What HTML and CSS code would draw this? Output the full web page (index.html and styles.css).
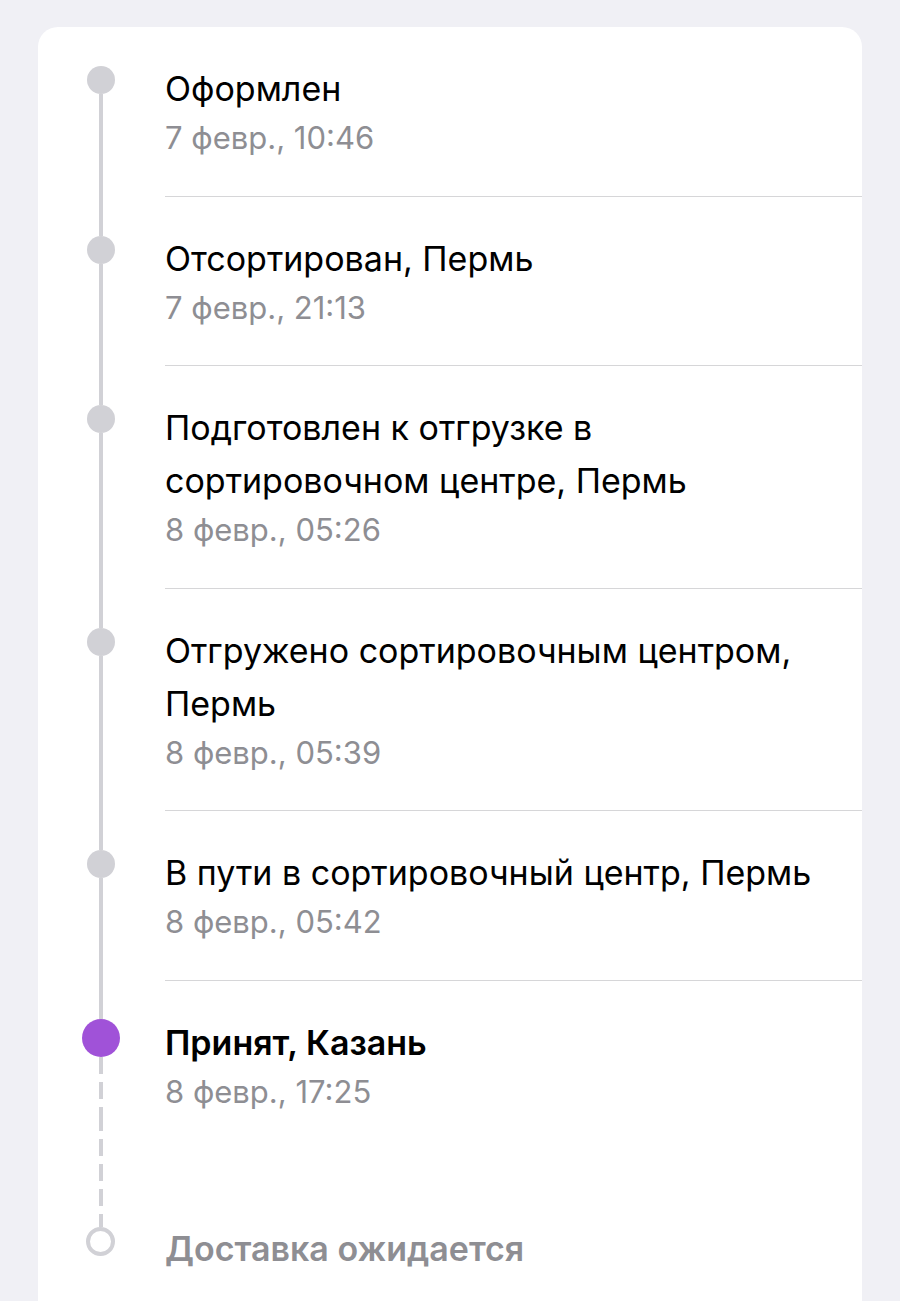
FILE: index.html
```html
<!DOCTYPE html>
<html lang="ru">
<head>
<meta charset="utf-8">
<title>Отслеживание</title>
<link rel="stylesheet" href="styles.css">
</head>
<body>
<div class="page">
  <section class="card">
    <div class="event event--first">
      <div class="rail"><span class="seg seg--top"></span><span class="dot"></span><span class="seg seg--bottom"></span></div>
      <div class="info">
        <div class="title">Оформлен</div>
        <div class="date">7 февр., 10:46</div>
      </div>
    </div>
    <div class="event">
      <div class="rail"><span class="seg seg--top"></span><span class="dot"></span><span class="seg seg--bottom"></span></div>
      <div class="info">
        <div class="title">Отсортирован, Пермь</div>
        <div class="date">7 февр., 21:13</div>
      </div>
    </div>
    <div class="event">
      <div class="rail"><span class="seg seg--top"></span><span class="dot"></span><span class="seg seg--bottom"></span></div>
      <div class="info">
        <div class="title">Подготовлен к отгрузке в<br>сортировочном центре, Пермь</div>
        <div class="date">8 февр., 05:26</div>
      </div>
    </div>
    <div class="event">
      <div class="rail"><span class="seg seg--top"></span><span class="dot"></span><span class="seg seg--bottom"></span></div>
      <div class="info">
        <div class="title">Отгружено сортировочным центром,<br>Пермь</div>
        <div class="date">8 февр., 05:39</div>
      </div>
    </div>
    <div class="event">
      <div class="rail"><span class="seg seg--top"></span><span class="dot"></span><span class="seg seg--bottom"></span></div>
      <div class="info">
        <div class="title">В пути в сортировочный центр, Пермь</div>
        <div class="date">8 февр., 05:42</div>
      </div>
    </div>
    <div class="event event--current">
      <div class="rail"><span class="seg seg--top"></span><span class="dot dot--current"></span><span class="seg seg--dashed"></span></div>
      <div class="info info--plain">
        <div class="title title--bold">Принят, Казань</div>
        <div class="date">8 февр., 17:25</div>
      </div>
    </div>
    <div class="event event--future">
      <div class="rail"><span class="seg seg--dashed seg--future"></span><span class="dot dot--hollow"></span></div>
      <div class="info info--future">
        <div class="title title--pending">Доставка ожидается</div>
      </div>
    </div>
  </section>
</div>
</body>
</html>
```
FILE: styles.css
```css
html, body {
  margin: 0;
  padding: 0;
}
body {
  background: #f0f0f5;
  font-family: Inter, "Noto Sans", "Liberation Sans", sans-serif;
  color: #000;
}
.page {
  padding: 27px 38px 0 38px;
}
.card {
  background: #fff;
  border-radius: 20px 20px 0 0;
  min-height: 1274px;
}
.event {
  display: grid;
  grid-template-columns: 125px 1fr;
  column-gap: 2px;
}
.rail {
  display: flex;
  flex-direction: column;
  align-items: center;
}
.seg {
  width: 4px;
  background: #d1d1d6;
}
.seg--top {
  height: 39px;
  flex: none;
}
.seg--bottom {
  flex: 1;
}
.event--first .seg--top {
  background: transparent;
}
.dot {
  flex: none;
  width: 28px;
  height: 28px;
  border-radius: 50%;
  background: #d1d1d6;
}
.event--current .seg--top {
  height: 38px;
}
.dot--current {
  width: 38px;
  height: 38px;
  background: #a052d8;
}
.seg--dashed {
  flex: 1;
  background: repeating-linear-gradient(to bottom, #d1d1d6 0 17px, transparent 17px 25px);
}
.seg--future {
  flex: none;
  height: 113px;
}
.dot--hollow {
  width: 29px;
  height: 29px;
  box-sizing: border-box;
  background: transparent;
  border: 4px solid #d1d1d6;
}
.info {
  padding: 35px 0 35.5px 0;
  border-bottom: 1px solid #d6d6d8;
}
.info--plain {
  border-bottom: none;
  padding-bottom: 0;
}
.info--future {
  border-bottom: none;
  padding: 108px 0 0 0;
}
.title {
  font-size: 34px;
  line-height: 53px;
  font-weight: 400;
  color: #000;
}
.title--bold {
  font-weight: 600;
}
.title--pending {
  font-weight: 600;
  color: #8e8e93;
}
.date {
  font-size: 31px;
  line-height: 45px;
  color: #8e8e93;
}
```
